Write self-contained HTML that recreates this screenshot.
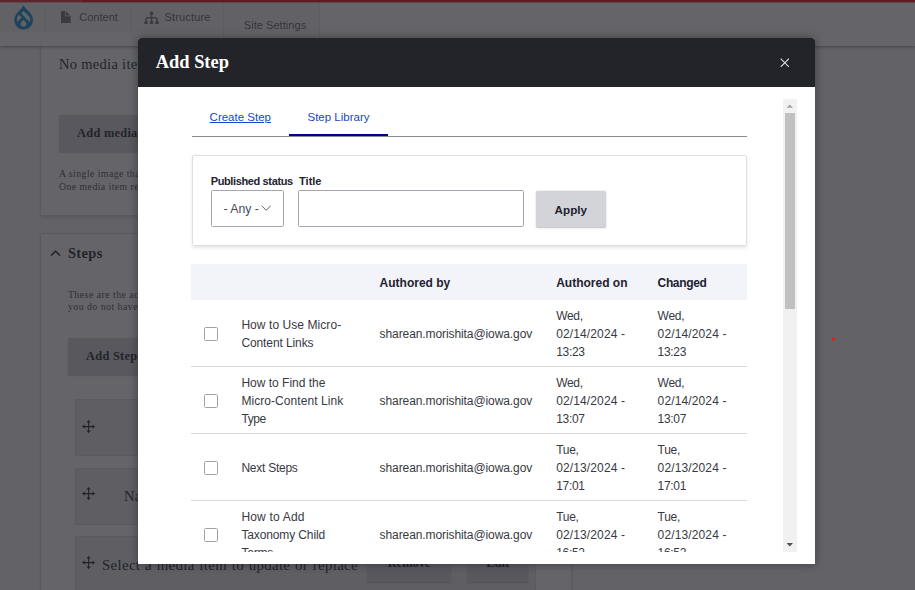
<!DOCTYPE html>
<html lang="en">
<head>
<meta charset="utf-8">
<title>Add Step</title>
<style>
html,body{margin:0;padding:0;}
body{width:915px;height:590px;overflow:hidden;position:relative;background:#f8f7f8;font-family:"Liberation Sans",sans-serif;color:#222330;}
.abs{position:absolute;}
.serif{font-family:"Liberation Serif",serif;}
.nw{white-space:nowrap;}
/* ---------- underlying page ---------- */
#page{position:absolute;left:0;top:0;width:915px;height:590px;overflow:hidden;}
.panel{position:absolute;background:#fff;border:0.8px solid #d6d6da;border-radius:2px;box-shadow:0 1.6px 3px rgba(0,0,0,.12);box-sizing:border-box;}
.gbtn{position:absolute;background:#d3d4d9;border-radius:1.5px;box-shadow:0 .8px 1.6px rgba(0,0,0,.2);box-sizing:border-box;font-family:"Liberation Serif",serif;font-weight:bold;color:#222330;white-space:nowrap;}
.pbox{position:absolute;background:#e9e8ec;border:0.8px solid #d9d9de;box-sizing:border-box;}
#toolbar{position:absolute;left:0;top:0;width:915px;height:46px;background:#fff;box-shadow:0 1.6px 3.500px rgba(0,0,0,.4);}
#tbar{position:absolute;left:0;top:2.5px;width:320px;height:29px;background:#f6f5f3;}
.sep{position:absolute;top:2.5px;width:1.2px;background:#e3e2e4;}
.tbi{position:absolute;font-size:11px;color:#5e5e63;white-space:nowrap;line-height:14px;}
/* ---------- overlay ---------- */
#overlay{position:absolute;left:0;top:0;width:915px;height:590px;background:rgba(35,36,41,.7);}
/* ---------- dialog ---------- */
#dialog{position:absolute;left:138.3px;top:37.7px;width:677px;height:526px;background:#fff;border-radius:3px 3px 0 0;box-shadow:0 0 10px rgba(0,0,0,.38);overflow:hidden;}
#dhead{position:absolute;left:0;top:0;width:100%;height:49.3px;background:#232429;}
#dtitle{position:absolute;left:17.5px;top:13.300px;font-family:"Liberation Serif",serif;font-weight:bold;font-size:18.4px;line-height:22px;color:#fff;white-space:nowrap;}
#scroll{position:absolute;left:18.7px;top:61.1px;width:640px;height:453px;overflow:hidden;}
#sb{position:absolute;right:0;top:0;width:13.6px;height:453px;background:#f1f1f1;}
#thumb{position:absolute;left:1.6px;top:14.2px;width:10.4px;height:195.600px;background:#c1c1c1;}
.t{position:absolute;white-space:nowrap;font-size:12px;line-height:17.92px;color:#222330;}
.b{font-weight:bold;}
.inp{position:absolute;box-sizing:border-box;border:1.2px solid #a3a6ae;border-radius:1.6px;background:#fff;}
.row{position:absolute;left:34.3px;width:555.6px;height:66.4px;border-bottom:0.8px solid #d8d9dd;}
.c{position:absolute;top:1.7px;height:66.4px;display:flex;align-items:center;font-size:12px;line-height:17.92px;color:#383943;}
.cb{position:absolute;left:12.7px;top:27.300px;width:13.6px;height:13.6px;box-sizing:border-box;border:1.1px solid #a0a3ab;border-radius:1.6px;background:#fff;}
</style>
</head>
<body>
<div id="page">
  <!-- panels -->
  <div class="panel" style="left:40.3px;top:-20px;width:532px;height:236.200px;"></div>
  <div class="panel" style="left:40.3px;top:233.3px;width:532px;height:400px;"></div>

  <div class="abs serif nw" style="left:59px;top:54.300px;font-size:14.5px;line-height:20px;letter-spacing:.3px;">No media items are selected.</div>
  <div class="gbtn" style="left:58.800px;top:115.3px;width:120px;height:36.7px;font-size:12.4px;line-height:36.7px;padding-left:18.300px;letter-spacing:.25px;">Add media</div>
  <div class="abs serif nw" style="left:59px;top:168.200px;font-size:9.9px;line-height:12.6px;letter-spacing:.4px;color:#4c4d57;">A single image that will be used for this item.<br>One media item remaining.</div>

  <!-- Steps -->
  <svg class="abs" style="left:50px;top:248.5px;" width="11" height="9" viewBox="0 0 11 9"><path d="M1 6.600 L5.500 2.100 L10 6.600" fill="none" stroke="#2b2c36" stroke-width="1.500"/></svg>
  <div class="abs serif nw b" style="left:67.9px;top:242.8px;font-size:14.4px;line-height:20px;letter-spacing:.4px;">Steps</div>
  <div class="abs serif nw" style="left:67.9px;top:288.700px;font-size:9.9px;line-height:12.200px;letter-spacing:.45px;color:#4c4d57;">These are the actions a user should take, in order. If<br>you do not have steps, leave this section empty.</div>
  <div class="gbtn" style="left:68.300px;top:338.3px;width:110px;height:36.6px;font-size:12.4px;line-height:36.6px;padding-left:17.800px;letter-spacing:.25px;">Add Step</div>

  <div class="pbox" style="left:75.4px;top:399.1px;width:460.5px;height:56.7px;"></div>
  <div class="pbox" style="left:75.4px;top:468px;width:460.5px;height:56.7px;"></div>
  <div class="pbox" style="left:75.4px;top:535.8px;width:460.5px;height:70px;"></div>

  <svg class="abs mv" style="left:81.700px;top:419.900px;" width="13.200" height="13.200" viewBox="0 0 13.200 13.200"><path d="M6.600 1.500V11.700M1.500 6.600H11.700" fill="none" stroke="#1f2029" stroke-width="1.100"/><path d="M6.600 0L8.700 2.600H4.500ZM6.600 13.200L8.700 10.600H4.500ZM0 6.600L2.600 4.500V8.700ZM13.200 6.600L10.600 4.500V8.700Z" fill="#1f2029"/></svg>
  <svg class="abs mv" style="left:81.700px;top:487.100px;" width="13.200" height="13.200" viewBox="0 0 13.200 13.200"><path d="M6.600 1.500V11.700M1.500 6.600H11.700" fill="none" stroke="#1f2029" stroke-width="1.100"/><path d="M6.600 0L8.700 2.600H4.500ZM6.600 13.200L8.700 10.600H4.500ZM0 6.600L2.600 4.500V8.700ZM13.200 6.600L10.600 4.500V8.700Z" fill="#1f2029"/></svg>
  <svg class="abs mv" style="left:81.700px;top:555.700px;" width="13.200" height="13.200" viewBox="0 0 13.200 13.200"><path d="M6.600 1.500V11.700M1.500 6.600H11.700" fill="none" stroke="#1f2029" stroke-width="1.100"/><path d="M6.600 0L8.700 2.600H4.500ZM6.600 13.200L8.700 10.600H4.500ZM0 6.600L2.600 4.500V8.700ZM13.200 6.600L10.600 4.500V8.700Z" fill="#1f2029"/></svg>

  <div class="abs serif nw" style="left:124px;top:486px;font-size:14.5px;line-height:20px;letter-spacing:.3px;">Name</div>
  <div class="abs serif nw" style="left:102px;top:554.500px;font-size:14.800px;line-height:20px;letter-spacing:.35px;word-spacing:.7px;">Select a media item to update or replace</div>
  <div class="gbtn" style="left:367px;top:545px;width:84.3px;height:36.6px;font-size:12.4px;line-height:36.6px;text-align:center;">Remove</div>
  <div class="gbtn" style="left:467px;top:545px;width:61.4px;height:36.6px;font-size:12.4px;line-height:36.6px;text-align:center;">Edit</div>

  <!-- toolbar -->
  <div id="toolbar">
    <div id="tbar"></div>
    <div class="abs" style="left:0;top:0;width:82px;height:2px;background:#e8313a;"></div><div class="abs" style="left:0;top:2px;width:82px;height:1px;background:#e8313a;opacity:.42;"></div>
    <div class="abs" style="left:82px;top:0;width:833px;height:2px;background:#eb0612;"></div><div class="abs" style="left:82px;top:2px;width:833px;height:1px;background:#eb0612;opacity:.42;"></div>
    <div class="sep" style="left:45px;height:29px;"></div>
    <div class="sep" style="left:130px;height:29px;"></div>
    <div class="sep" style="left:223.2px;height:35px;"></div>
    <div class="sep" style="left:319px;height:35px;"></div>
    <!-- drupal logo -->
    <svg class="abs" style="left:14.200px;top:5.100px;" width="19.300" height="24.700" viewBox="0 0 18.600 23.800">
      <path d="M9.200 0.300C10.300 2.700 12.700 4.500 14.700 6.700C16.800 9 18.300 11.300 18.300 14.400C18.300 19.500 14.200 23.600 9.200 23.600C4.200 23.600 0.300 19.500 0.300 14.400C0.300 11.300 1.800 9 3.900 6.700C5.900 4.500 8.100 2.700 9.200 0.300Z" fill="#0a8fd4"/>
      <path d="M9.200 14.100C10.300 15.300 12 16.400 12 18.200C12 19.700 10.750 20.900 9.200 20.900C7.650 20.900 6.400 19.700 6.400 18.200C6.400 16.400 8.100 15.300 9.200 14.100Z" fill="#f6f5f3"/>
      <path d="M4.800 9.500L7.400 12.100L3.500 16.300C2.300 14.100 2.800 11.400 4.800 9.500Z" fill="#f6f5f3"/>
      <path d="M8.950 5.700C10.300 6.700 11.600 7.800 12.700 9C14.100 10.500 15.300 12 15.500 13.600C15.600 14.500 15.500 15.300 15.100 16.400L7 8.100C7.500 7.200 8.200 6.400 8.950 5.700Z" fill="#f6f5f3"/>
    </svg>
    <!-- content icon -->
    <svg class="abs" style="left:61.300px;top:10.900px;" width="9.700" height="12" viewBox="0 0 9.700 12"><path d="M0 0H4.300V5.300H9.700V12H0Z M5 0.300L9.100 4.500H5Z" fill="#707075"/></svg>
    <div class="tbi" style="left:79.3px;top:10.200px;">Content</div>
    <!-- structure icon -->
    <svg class="abs" style="left:143.800px;top:10.600px;" width="15" height="13.600" viewBox="0 0 15 13.600"><g fill="#707075"><circle cx="7.500" cy="2.300" r="1.850"/><circle cx="2" cy="11.700" r="1.850"/><circle cx="7.500" cy="11.700" r="1.850"/><circle cx="13" cy="11.700" r="1.850"/></g><path d="M7.500 2.300V11.600M2 11.600V8.200Q2 6.700 3.500 6.700H11.500Q13 6.700 13 8.200V11.600" fill="none" stroke="#707075" stroke-width="1.400"/></svg>
    <div class="tbi" style="left:164.500px;top:10.200px;letter-spacing:.16px;">Structure</div>
    <div class="tbi" style="left:243.800px;top:17.500px;letter-spacing:.05px;">Site Settings</div>
  </div>
</div>

<div id="overlay"></div>
<svg class="abs" style="left:828px;top:333px;" width="12" height="12" viewBox="0 0 12 12"><circle cx="5.650" cy="5.950" r="1.750" fill="#f41414"/></svg>

<div id="dialog">
  <div id="dhead">
    <div id="dtitle">Add Step</div>
    <svg class="abs" style="left:641.500px;top:20px;" width="9.600" height="9.600" viewBox="0 0 9.600 9.600"><path d="M0.700 0.700L8.900 8.900M8.900 0.700L0.700 8.900" stroke="#d6d6da" stroke-width="1.150" fill="none"/></svg>
  </div>
  <div id="scroll">
    <!-- tabs -->
    <div class="t" style="left:52.600px;top:10.600px;font-size:11.500px;color:#1446d0;text-decoration:underline;">Create Step</div>
    <div class="t" style="left:150.500px;top:10.600px;font-size:11.500px;color:#1a46c4;">Step Library</div>
    <div class="abs" style="left:34.700px;top:37.100px;width:555.800px;height:0.900px;background:#8b8b90;"></div>
    <div class="abs" style="left:132.200px;top:35.200px;width:98.700px;height:2.500px;background:#00008f;"></div>

    <!-- filter box -->
    <div class="abs" style="left:34.600px;top:56.400px;width:555.700px;height:91px;box-sizing:border-box;border:0.800px solid #dedfe4;border-radius:2px;box-shadow:0 1.600px 3.200px rgba(0,0,0,.1);"></div>
    <div class="t b" style="left:53.700px;top:74.100px;font-size:11px;letter-spacing:-.37px;">Published status</div>
    <div class="t b" style="left:142.100px;top:74.100px;font-size:11px;">Title</div>
    <div class="inp" style="left:53.700px;top:91.500px;width:73.200px;height:36.700px;"></div>
    <div class="t" style="left:66.400px;top:102.500px;font-size:12.300px;color:#4a4c55;">- Any -</div>
    <svg class="abs" style="left:104px;top:106.600px;" width="10.400" height="6.400" viewBox="0 0 10.400 6.400"><path d="M0.600 0.700L5.200 5.300L9.800 0.700" fill="none" stroke="#55575f" stroke-width="0.95"/></svg>
    <div class="inp" style="left:141.400px;top:91.500px;width:225.200px;height:36.700px;"></div>
    <div class="abs" style="left:379.100px;top:91.800px;width:69.600px;height:36.700px;background:#d3d4d9;border-radius:1.600px;box-shadow:0 .800px 1.600px rgba(0,0,0,.25);"></div>
    <div class="t b" style="left:397.600px;top:102.300px;font-size:11.700px;">Apply</div>

    <!-- table -->
    <div class="abs" style="left:34.300px;top:165.700px;width:555.600px;height:35.200px;background:#f3f4f9;"></div>
    <div class="t b" style="left:222.600px;top:176.100px;">Authored by</div>
    <div class="t b" style="left:399.200px;top:176.100px;">Authored on</div>
    <div class="t b" style="left:500.600px;top:176.100px;letter-spacing:-.35px;">Changed</div>

    <div class="row" style="top:200.900px;">
      <div class="cb"></div>
      <div class="c" style="left:50.100px;"><div><span style="letter-spacing:.07px">How to Use Micro-</span><br><span style="letter-spacing:-.1px">Content Links</span></div></div>
      <div class="c" style="left:188.300px;letter-spacing:-.09px;"><div>sharean.morishita@iowa.gov</div></div>
      <div class="c" style="left:364.900px;"><div><span style="letter-spacing:-.3px">Wed,</span><br><span style="letter-spacing:.13px">02/14/2024 -</span><br><span style="letter-spacing:-.3px">13:23</span></div></div>
      <div class="c" style="left:466.300px;"><div><span style="letter-spacing:-.3px">Wed,</span><br><span style="letter-spacing:.13px">02/14/2024 -</span><br><span style="letter-spacing:-.3px">13:23</span></div></div>
    </div>
    <div class="row" style="top:268.100px;">
      <div class="cb"></div>
      <div class="c" style="left:50.100px;"><div>How to Find the<br><span style="letter-spacing:.07px">Micro-Content Link</span><br><span style="letter-spacing:-.4px">Type</span></div></div>
      <div class="c" style="left:188.300px;letter-spacing:-.09px;"><div>sharean.morishita@iowa.gov</div></div>
      <div class="c" style="left:364.900px;"><div><span style="letter-spacing:-.3px">Wed,</span><br><span style="letter-spacing:.13px">02/14/2024 -</span><br><span style="letter-spacing:-.3px">13:07</span></div></div>
      <div class="c" style="left:466.300px;"><div><span style="letter-spacing:-.3px">Wed,</span><br><span style="letter-spacing:.13px">02/14/2024 -</span><br><span style="letter-spacing:-.3px">13:07</span></div></div>
    </div>
    <div class="row" style="top:335.300px;">
      <div class="cb"></div>
      <div class="c" style="left:50.100px;"><div><span style="letter-spacing:-.25px">Next Steps</span></div></div>
      <div class="c" style="left:188.300px;letter-spacing:-.09px;"><div>sharean.morishita@iowa.gov</div></div>
      <div class="c" style="left:364.900px;"><div><span style="letter-spacing:-.3px">Tue,</span><br><span style="letter-spacing:.13px">02/13/2024 -</span><br><span style="letter-spacing:-.3px">17:01</span></div></div>
      <div class="c" style="left:466.300px;"><div><span style="letter-spacing:-.3px">Tue,</span><br><span style="letter-spacing:.13px">02/13/2024 -</span><br><span style="letter-spacing:-.3px">17:01</span></div></div>
    </div>
    <div class="row" style="top:402.500px;">
      <div class="cb" style="top:26.700px;"></div>
      <div class="c" style="left:50.100px;"><div><span style="letter-spacing:.2px">How to Add</span><br><span style="letter-spacing:-.12px">Taxonomy Child</span><br><span style="letter-spacing:-.2px">Terms</span></div></div>
      <div class="c" style="left:188.300px;letter-spacing:-.09px;"><div>sharean.morishita@iowa.gov</div></div>
      <div class="c" style="left:364.900px;"><div><span style="letter-spacing:-.3px">Tue,</span><br><span style="letter-spacing:.13px">02/13/2024 -</span><br><span style="letter-spacing:-.3px">16:52</span></div></div>
      <div class="c" style="left:466.300px;"><div><span style="letter-spacing:-.3px">Tue,</span><br><span style="letter-spacing:.13px">02/13/2024 -</span><br><span style="letter-spacing:-.3px">16:52</span></div></div>
    </div>

    <!-- scrollbar -->
    <div id="sb">
      <svg class="abs" style="left:0;top:0;" width="13.600" height="13.600" viewBox="0 0 13.600 13.600"><path d="M3.600 8.800L6.800 5.400L10 8.800Z" fill="#a3a3a3"/></svg>
      <div id="thumb"></div>
      <svg class="abs" style="left:0;bottom:0;" width="13.600" height="13.600" viewBox="0 0 13.600 13.600"><path d="M3.600 5L6.800 8.400L10 5Z" fill="#505050"/></svg>
    </div>
  </div>
</div>
</body>
</html>
